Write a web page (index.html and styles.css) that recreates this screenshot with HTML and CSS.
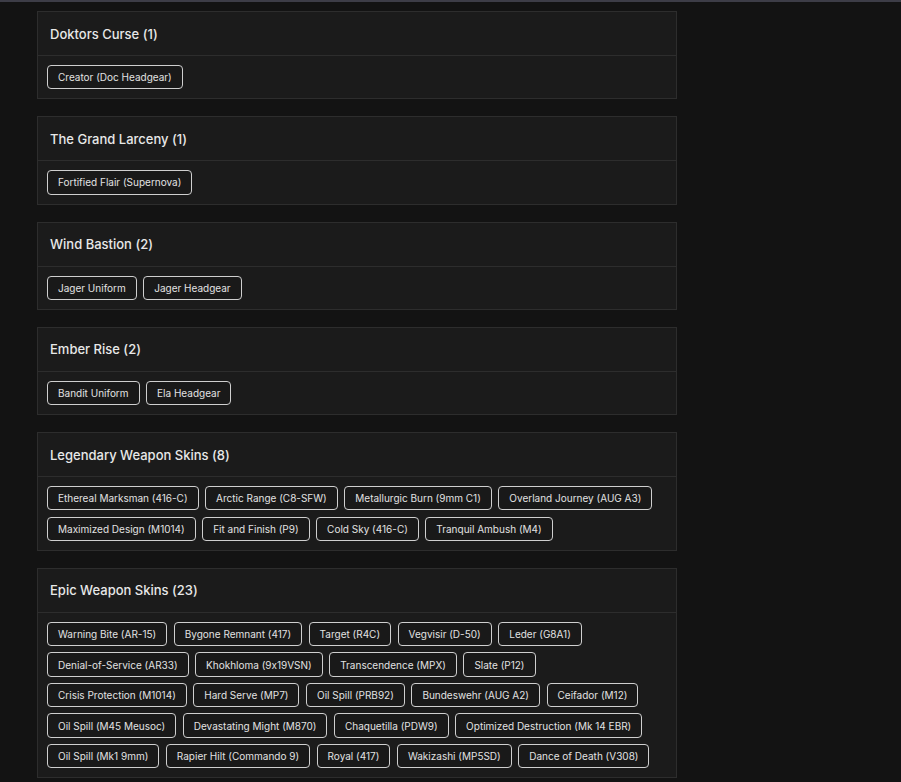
FILE: index.html
```html
<!DOCTYPE html>
<html lang="en">
<head>
<meta charset="utf-8">
<title>Collection</title>
<link rel="stylesheet" href="styles.css">
</head>
<body>
<div class="topbar"></div>
<main class="list">
  <section class="card">
    <h2 class="card-title">Doktors Curse (1)</h2>
    <div class="tags">
      <span class="tag">Creator (Doc Headgear)</span>
    </div>
  </section>
  <section class="card">
    <h2 class="card-title">The Grand Larceny (1)</h2>
    <div class="tags">
      <span class="tag">Fortified Flair (Supernova)</span>
    </div>
  </section>
  <section class="card">
    <h2 class="card-title">Wind Bastion (2)</h2>
    <div class="tags">
      <span class="tag">Jager Uniform</span>
      <span class="tag">Jager Headgear</span>
    </div>
  </section>
  <section class="card">
    <h2 class="card-title">Ember Rise (2)</h2>
    <div class="tags">
      <span class="tag">Bandit Uniform</span>
      <span class="tag">Ela Headgear</span>
    </div>
  </section>
  <section class="card">
    <h2 class="card-title">Legendary Weapon Skins (8)</h2>
    <div class="tags">
      <span class="tag">Ethereal Marksman (416-C)</span>
      <span class="tag">Arctic Range (C8-SFW)</span>
      <span class="tag">Metallurgic Burn (9mm C1)</span>
      <span class="tag">Overland Journey (AUG A3)</span>
      <span class="tag">Maximized Design (M1014)</span>
      <span class="tag">Fit and Finish (P9)</span>
      <span class="tag">Cold Sky (416-C)</span>
      <span class="tag">Tranquil Ambush (M4)</span>
    </div>
  </section>
  <section class="card">
    <h2 class="card-title">Epic Weapon Skins (23)</h2>
    <div class="tags">
      <span class="tag">Warning Bite (AR-15)</span>
      <span class="tag">Bygone Remnant (417)</span>
      <span class="tag">Target (R4C)</span>
      <span class="tag">Vegvisir (D-50)</span>
      <span class="tag">Leder (G8A1)</span>
      <span class="tag">Denial-of-Service (AR33)</span>
      <span class="tag">Khokhloma (9x19VSN)</span>
      <span class="tag">Transcendence (MPX)</span>
      <span class="tag">Slate (P12)</span>
      <span class="tag">Crisis Protection (M1014)</span>
      <span class="tag">Hard Serve (MP7)</span>
      <span class="tag">Oil Spill (PRB92)</span>
      <span class="tag">Bundeswehr (AUG A2)</span>
      <span class="tag">Ceifador (M12)</span>
      <span class="tag">Oil Spill (M45 Meusoc)</span>
      <span class="tag">Devastating Might (M870)</span>
      <span class="tag">Chaquetilla (PDW9)</span>
      <span class="tag">Optimized Destruction (Mk 14 EBR)</span>
      <span class="tag">Oil Spill (Mk1 9mm)</span>
      <span class="tag">Rapier Hilt (Commando 9)</span>
      <span class="tag">Royal (417)</span>
      <span class="tag">Wakizashi (MP5SD)</span>
      <span class="tag">Dance of Death (V308)</span>
    </div>
  </section>
</main>
</body>
</html>
```
FILE: styles.css
```css
html, body {
  margin: 0;
  padding: 0;
  background: #131313;
  font-family: Inter, "Noto Sans", sans-serif;
  font-feature-settings: "calt" 0;
  color: #e4e4e4;
}

.topbar {
  height: 2px;
  background: #3d3d47;
}

.list {
  display: flex;
  flex-direction: column;
  gap: 17px;
  width: 640px;
  margin: 9px 0 0 37px;
}

.card {
  background: #1b1b1b;
  border: 1px solid #2d2d2d;
}

.card-title {
  margin: 0;
  height: 43px;
  display: flex;
  align-items: center;
  padding: 0 12px;
  font-size: 13px;
  font-weight: 500;
  color: #e8e8e8;
  border-bottom: 1px solid #2d2d2d;
}

.tags {
  display: flex;
  flex-wrap: wrap;
  column-gap: 6.5px;
  row-gap: 6.2px;
  padding: 9px;
}

.tag {
  box-sizing: border-box;
  height: 24.3px;
  display: inline-flex;
  align-items: center;
  padding: 0 10px;
  border: 1px solid #cfcfcf;
  border-radius: 4px;
  background: #191919;
  font-size: 10px;
  color: #e2e2e2;
  white-space: nowrap;
}
```
